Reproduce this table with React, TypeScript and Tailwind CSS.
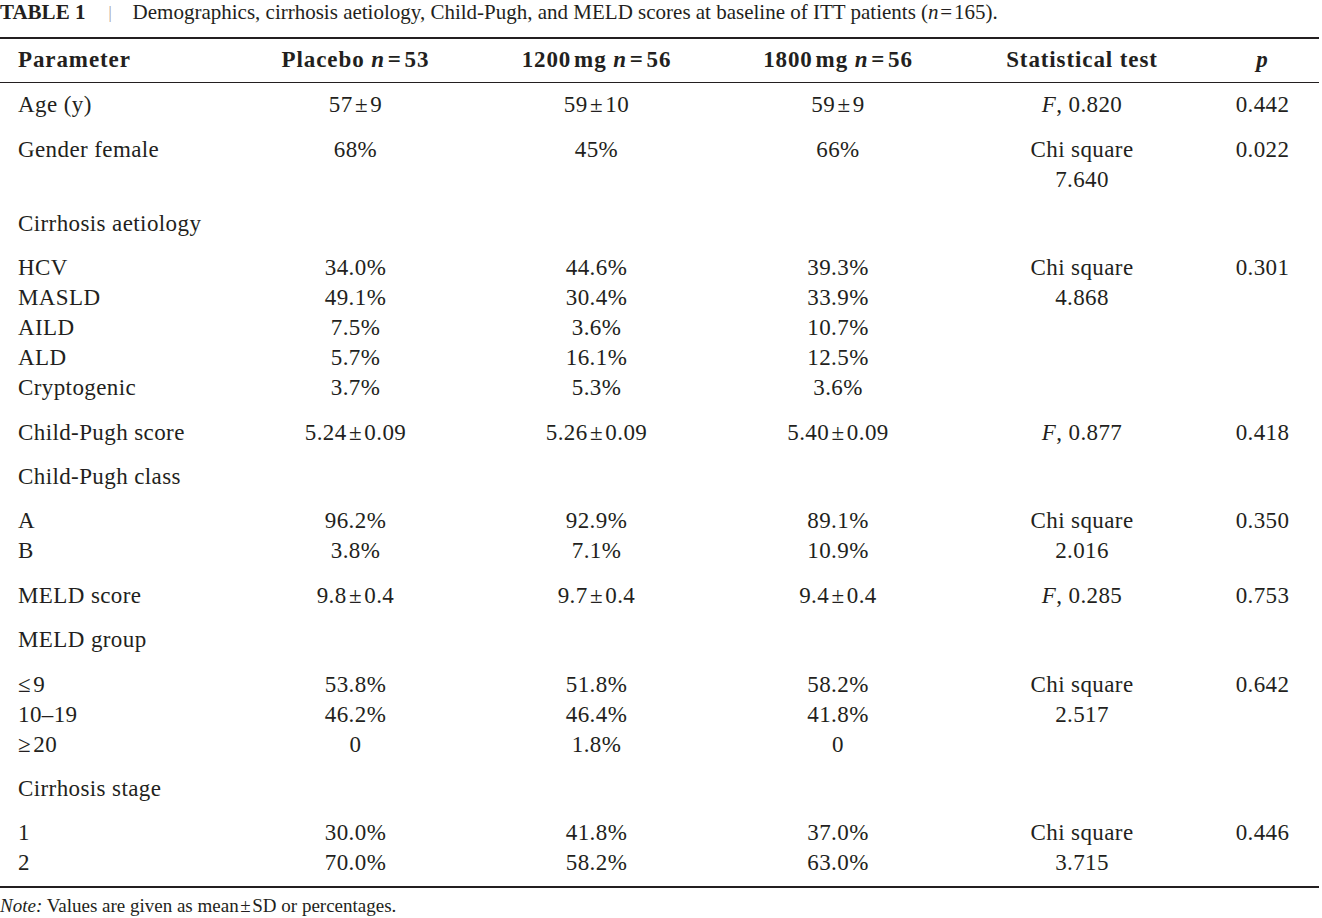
const pm = '\u200a±\u200a';

type Row = {
  label: string[];
  placebo?: string[];
  mg1200?: string[];
  mg1800?: string[];
  test?: React.ReactNode[];
  p?: string[];
};

const F = (v: string) => (
  <>
    <i>F</i>, {v}
  </>
);

const rows: Row[] = [
  { label: ['Age (y)'], placebo: [`57${pm}9`], mg1200: [`59${pm}10`], mg1800: [`59${pm}9`], test: [F('0.820')], p: ['0.442'] },
  { label: ['Gender female'], placebo: ['68%'], mg1200: ['45%'], mg1800: ['66%'], test: ['Chi square', '7.640'], p: ['0.022'] },
  { label: ['Cirrhosis aetiology'] },
  {
    label: ['HCV', 'MASLD', 'AILD', 'ALD', 'Cryptogenic'],
    placebo: ['34.0%', '49.1%', '7.5%', '5.7%', '3.7%'],
    mg1200: ['44.6%', '30.4%', '3.6%', '16.1%', '5.3%'],
    mg1800: ['39.3%', '33.9%', '10.7%', '12.5%', '3.6%'],
    test: ['Chi square', '4.868'],
    p: ['0.301'],
  },
  { label: ['Child-Pugh score'], placebo: [`5.24${pm}0.09`], mg1200: [`5.26${pm}0.09`], mg1800: [`5.40${pm}0.09`], test: [F('0.877')], p: ['0.418'] },
  { label: ['Child-Pugh class'] },
  { label: ['A', 'B'], placebo: ['96.2%', '3.8%'], mg1200: ['92.9%', '7.1%'], mg1800: ['89.1%', '10.9%'], test: ['Chi square', '2.016'], p: ['0.350'] },
  { label: ['MELD score'], placebo: [`9.8${pm}0.4`], mg1200: [`9.7${pm}0.4`], mg1800: [`9.4${pm}0.4`], test: [F('0.285')], p: ['0.753'] },
  { label: ['MELD group'] },
  {
    label: ['≤\u200a9', '10–19', '≥\u200a20'],
    placebo: ['53.8%', '46.2%', '0'],
    mg1200: ['51.8%', '46.4%', '1.8%'],
    mg1800: ['58.2%', '41.8%', '0'],
    test: ['Chi square', '2.517'],
    p: ['0.642'],
  },
  { label: ['Cirrhosis stage'] },
  { label: ['1', '2'], placebo: ['30.0%', '70.0%'], mg1200: ['41.8%', '58.2%'], mg1800: ['37.0%', '63.0%'], test: ['Chi square', '3.715'], p: ['0.446'] },
];

const grid = 'grid grid-cols-[235px_241px_241px_242px_246px_115px]';

function Cell({ lines, left }: { lines?: React.ReactNode[]; left?: boolean }) {
  return (
    <div className={`flex flex-col ${left ? 'items-start pl-[18px]' : 'items-center'}`}>
      {(lines || []).map((l, i) => (
        <div key={i} className="leading-[30px] whitespace-nowrap">
          {l}
        </div>
      ))}
    </div>
  );
}

export default function App() {
  return (
    <div
      className="w-[1322px] h-[918px] bg-white text-[#231f20] overflow-hidden"
      style={{ fontFamily: '"Liberation Serif", "Times New Roman", serif' }}
    >
      {/* Caption */}
      <div className="h-[25px] flex items-center text-[21px] leading-[25px] whitespace-nowrap">
        <span className="font-bold">TABLE 1</span>
        <span className="text-[#9a9a9a] ml-[23px] mr-[21px] text-[16px]">|</span>
        <span>
          Demographics, cirrhosis aetiology, Child-Pugh, and MELD scores at baseline of ITT patients (<i>n</i>
          {'\u200a=\u200a'}165).
        </span>
      </div>

      <div className="w-[1319px] mt-[12px] border-t-2 border-[#231f20]">
        {/* Header */}
        <div className={`${grid} h-[44px] items-center font-bold text-[23px] tracking-[0.9px] border-b-[1.5px] border-[#231f20]`}>
          <div className="pl-[18px]">Parameter</div>
          <div className="text-center">
            Placebo <i>n</i>
            {'\u200a=\u200a'}53
          </div>
          <div className="text-center">
            1200{'\u200a'}mg <i>n</i>
            {'\u200a=\u200a'}56
          </div>
          <div className="text-center">
            1800{'\u200a'}mg <i>n</i>
            {'\u200a=\u200a'}56
          </div>
          <div className="text-center">Statistical test</div>
          <div className="text-center">
            <i>p</i>
          </div>
        </div>

        {/* Body */}
        <div className="text-[23px] tracking-[0.4px] border-b-2 border-[#231f20]">
          {rows.map((r, i) => (
            <div key={i} className={`${grid} py-[7.2px]`}>
              <Cell lines={r.label} left />
              <Cell lines={r.placebo} />
              <Cell lines={r.mg1200} />
              <Cell lines={r.mg1800} />
              <Cell lines={r.test} />
              <Cell lines={r.p} />
            </div>
          ))}
        </div>
      </div>

      {/* Footnote */}
      <div className="mt-[7px] text-[19px] leading-[22px] whitespace-nowrap">
        <i>Note:</i> Values are given as mean{'\u200a±\u200a'}SD or percentages.
      </div>
    </div>
  );
}
